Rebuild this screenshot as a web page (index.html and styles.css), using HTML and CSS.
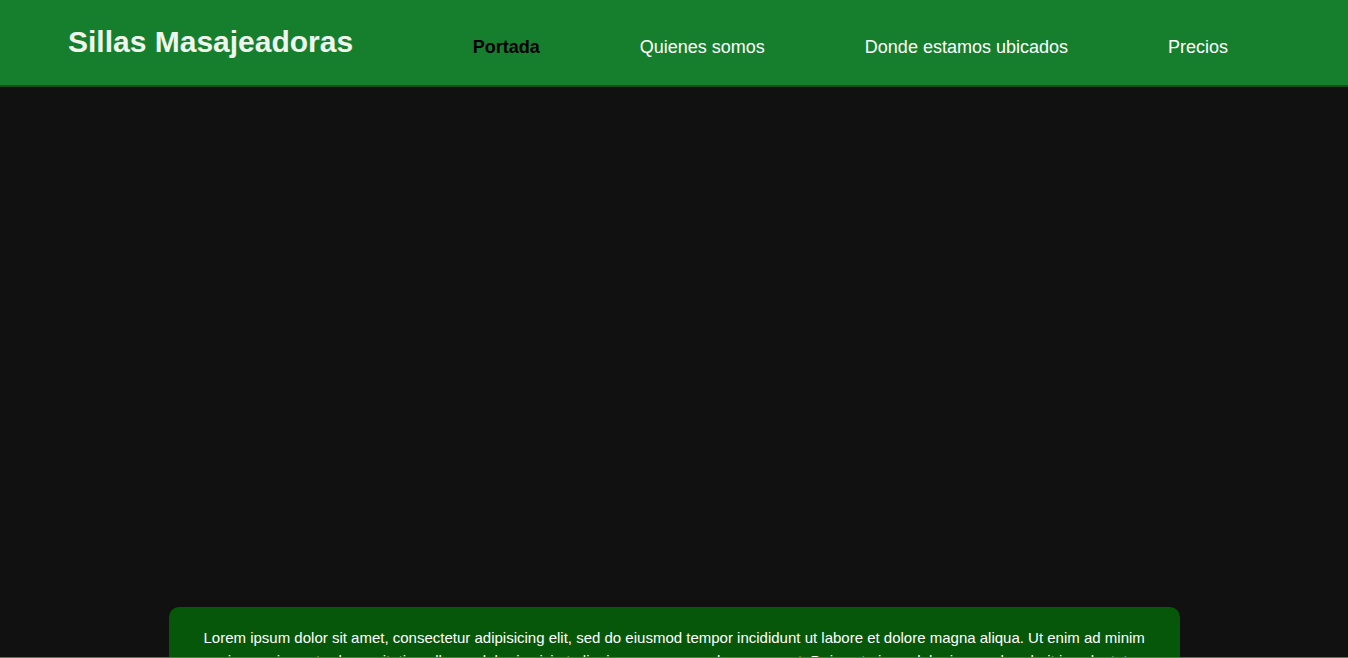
FILE: index.html
```html
<!DOCTYPE html>
<html lang="es">
<head>
<meta charset="utf-8">
<title>Sillas Masajeadoras</title>
<link rel="stylesheet" href="styles.css">
</head>
<body>
<header class="site-header">
  <h1 class="brand">Sillas Masajeadoras</h1>
  <nav class="main-nav">
    <a class="nav-link active" href="#">Portada</a>
    <a class="nav-link" href="#">Quienes somos</a>
    <a class="nav-link" href="#">Donde estamos ubicados</a>
    <a class="nav-link" href="#">Precios</a>
  </nav>
</header>
<main class="content">
  <section class="hero"></section>
  <section class="card">
    <p class="card-text">Lorem ipsum dolor sit amet, consectetur adipisicing elit, sed do eiusmod tempor incididunt ut labore et dolore magna aliqua. Ut enim ad minim veniam, quis nostrud exercitation ullamco laboris nisi ut aliquip ex ea commodo consequat. Duis aute irure dolor in reprehenderit in voluptate velit esse cillum dolore eu fugiat nulla pariatur. Excepteur sint occaecat cupidatat non proident, sunt in culpa qui officia deserunt mollit anim id est laborum.</p>
  </section>
</main>
<div class="bottom-line"></div>
</body>
</html>
```
FILE: styles.css
```css
* { box-sizing: border-box; }
html, body {
  margin: 0;
  padding: 0;
}
body {
  background: #111111;
  font-family: "Liberation Sans", Arial, sans-serif;
  color: #ffffff;
}
.site-header {
  height: 87px;
  background: #167f2d;
  border-bottom: 2px solid #1d4d17;
  display: flex;
  align-items: flex-start;
  justify-content: space-between;
  padding: 0 70px 0 68px;
}
.brand {
  margin: 0;
  padding-top: 25px;
  font-size: 30px;
  line-height: 34px;
  font-weight: bold;
  color: #eef6ee;
}
.main-nav {
  display: flex;
  padding-top: 37px;
}
.nav-link {
  font-size: 18px;
  line-height: 21px;
  color: #ffffff;
  text-decoration: none;
  padding: 0 50px;
}
.nav-link.active {
  color: #000000;
  font-weight: bold;
}
.hero {
  height: 520px;
}
.card {
  width: 75%;
  margin: 0 auto;
  background: #07570b;
  border-radius: 10px;
  padding: 20px 28px 20px 35px;
}
.card-text {
  margin: 0;
  font-size: 15px;
  line-height: 22.5px;
  color: #ffffff;
}
.bottom-line {
  position: fixed;
  left: 0;
  right: 0;
  bottom: 0;
  height: 1px;
  background: #5b7b3b;
}
```
